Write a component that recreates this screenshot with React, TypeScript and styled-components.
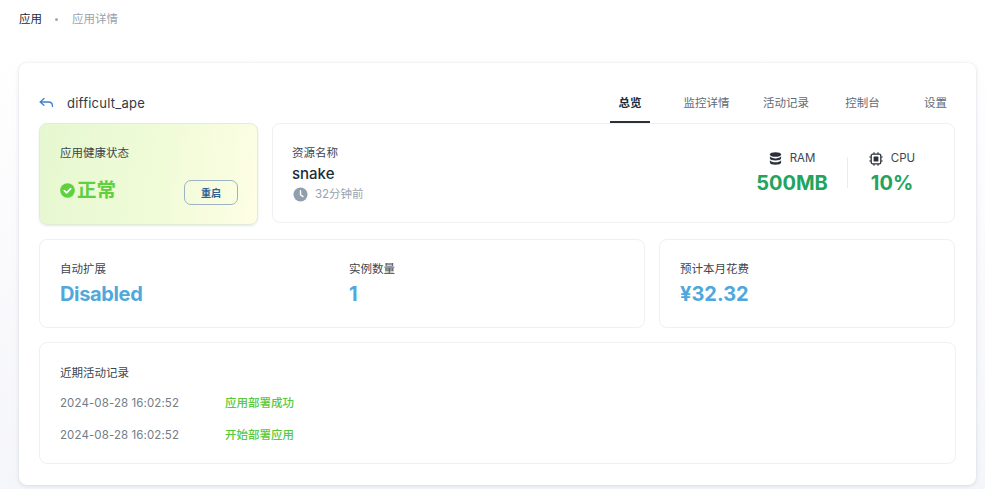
import React from "react";
import styled, { createGlobalStyle } from "styled-components";

const Global = createGlobalStyle`
  html, body { margin: 0; padding: 0; background: #fff; }
  body { font-family: Inter, "Noto Sans CJK SC", sans-serif; width: 985px; height: 489px; overflow: hidden; }
`;
const Page = styled.div`
  height: 489px; box-sizing: border-box; padding: 0 9px 0 19px;
  background: linear-gradient(180deg, #fff 0, #fff 40px, #f9f9fc 300px, #f5f6fa 489px);
  overflow: hidden;
`;
const Crumbs = styled.div`
  height: 63px; box-sizing: border-box; padding-top: 11px; display: flex; align-items: flex-start;
  font-size: 11.5px; line-height: 17px; color: #212b36;
`;
const Dot = styled.span`
  width: 3px; height: 3px; border-radius: 50%; background: #a0a8b2; margin: 7px 14px 0 13px;
`;
const CrumbMuted = styled.span` color: #9aa3ae; `;
const Shell = styled.div`
  width: 957px; height: 422px; box-sizing: border-box; padding: 24px 20px 0;
  background: #fff; border-radius: 8px;
  box-shadow: 0 1px 4px rgba(145,158,171,.28), 0 0 2px rgba(145,158,171,.12);
`;
const Head = styled.div`
  height: 36px; display: flex; justify-content: space-between; align-items: stretch;
`;
const TitleWrap = styled.div`
  display: flex; align-items: center; gap: 13px; height: 32px;
`;
const Title = styled.span`
  font-size: 13px; color: #2f3a45; letter-spacing: .25px;
`;
const Tabs = styled.div` display: flex; height: 36px; margin-right: 1px; `;
const Tab = styled.div<{ $w: number; $active?: boolean }>`
  width: ${p => p.$w}px; box-sizing: border-box; text-align: center; padding-top: 8px;
  font-size: 11.5px; line-height: 16px;
  color: ${p => (p.$active ? "#212b36" : "#5f6b78")};
  font-weight: ${p => (p.$active ? 600 : 400)};
  border-bottom: 2px solid ${p => (p.$active ? "#2b3138" : "transparent")};
`;
const Row = styled.div`
  display: flex; align-items: flex-start; gap: 14px; margin-bottom: 14px;
`;
const Card = styled.div<{ $w: number; $h: number; $top?: number; $left?: number }>`
  width: ${p => p.$w}px; height: ${p => p.$h}px; box-sizing: border-box;
  padding: ${p => p.$top ?? 21}px 19px 0 ${p => p.$left ?? 20}px;
  border: 1px solid #eef0f3; border-radius: 8px; background: #fff;
  flex: none;
`;
const HealthCard = styled(Card)`
  background: linear-gradient(100deg, #e6f8d0 0%, #f0fbd8 55%, #fefee4 100%);
  border-color: #e3ecd9;
  box-shadow: 0 1px 2px rgba(145,158,171,.25);
`;
const Label = styled.div`
  font-size: 11.5px; line-height: 17px; color: #3c4650;
`;
const HealthRow = styled.div`
  display: flex; justify-content: space-between; align-items: flex-start; margin-top: 14px;
`;
const Status = styled.div`
  display: flex; align-items: center; gap: 2px; color: #5fd03f; font-size: 19.5px; font-weight: 600; line-height: 28px;
`;
const Restart = styled.button`
  width: 54px; height: 25px; padding: 0; border: 1px solid #9db2c2; border-radius: 7px; background: transparent;
  font: 600 10px Inter, "Noto Sans CJK SC", sans-serif; color: #2f5f95; margin-top: 4px;
`;
const ResourceCard = styled(Card)`
  display: flex; justify-content: space-between;
`;
const ResName = styled.div`
  font-size: 15px; line-height: 20px; color: #212b36; margin-top: 2px; font-weight: 500;
`;
const Since = styled.div`
  display: flex; align-items: center; gap: 7px; margin-left: 1px;
  font-size: 11.5px; line-height: 20px; color: #98a2ad;
`;
const Metrics = styled.div`
  display: flex; align-items: flex-start; padding-top: 5px; margin-right: 17px;
`;
const Metric = styled.div<{ $w: number }>`
  width: ${p => p.$w}px; display: flex; flex-direction: column; align-items: center;
`;
const MetricHead = styled.div`
  display: flex; align-items: center; gap: 8px; font-size: 11.5px; line-height: 17px; color: #3c4650; height: 17px;
`;
const MetricValue = styled.div`
  font-size: 20px; line-height: 28px; font-weight: 700; color: #22a45d; margin-top: 2px;
`;
const Divider = styled.div`
  width: 1px; height: 31px; background: #e9ecef; margin: 7px 18px 0 20px;
`;
const Pair = styled.div`
  display: grid; grid-template-columns: 289px 1fr;
`;
const BigValue = styled.div<{ $tight?: boolean }>`
  font-size: 20px; line-height: 28px; font-weight: 700; color: #4fa8dc; margin-top: 2px;
  letter-spacing: ${p => (p.$tight ? "-0.35px" : "0")};
`;
const LogList = styled.div`
  display: flex; flex-direction: column; gap: 15px; margin-top: 13px;
`;
const LogRow = styled.div`
  display: grid; grid-template-columns: 165px 1fr; font-size: 11.5px; line-height: 17px;
`;
const LogTime = styled.span` color: #737d88; letter-spacing: .1px; `;
const LogText = styled.span` color: #56c93c; font-weight: 500; `;

const Back = () => (
  <svg width="15" height="14" viewBox="0 0 15 14" fill="none" stroke="#3f7fcf" strokeWidth="1.3" strokeLinecap="round" strokeLinejoin="round">
    <path d="M5 2.5 1.2 6 5 9.2" />
    <path d="M1.4 6H9.6c2.3 0 3.9 1.6 3.9 4.4" />
  </svg>
);
const Check = () => (
  <svg width="15" height="15" viewBox="0 0 15 15">
    <circle cx="7.5" cy="7.5" r="7.3" fill="#5fd03f" />
    <path d="M4.3 7.6 6.6 9.8 10.7 5.6" fill="none" stroke="#fff" strokeWidth="1.7" strokeLinecap="round" strokeLinejoin="round" />
  </svg>
);
const Clock = () => (
  <svg width="15" height="15" viewBox="0 0 15 15">
    <circle cx="7.5" cy="7.5" r="7" fill="#919eab" />
    <path d="M7.5 3.8V7.8L10 9.6" fill="none" stroke="#fff" strokeWidth="1.4" strokeLinecap="round" strokeLinejoin="round" />
  </svg>
);
const Database = () => (
  <svg width="13" height="13" viewBox="0 0 13 13" fill="#2b3138">
    <ellipse cx="6.5" cy="2.5" rx="5.6" ry="2.3" />
    <path d="M.9 4.3c1 1.5 3.2 2.1 5.6 2.1s4.6-.6 5.6-2.1v2c0 1.3-2.5 2.3-5.6 2.3S.9 7.6.9 6.3z" />
    <path d="M.9 8.2c1 1.5 3.2 2.1 5.6 2.1s4.6-.6 5.6-2.1v2.2c0 1.3-2.5 2.3-5.6 2.3S.9 11.7.9 10.4z" />
  </svg>
);
const Chip = () => (
  <svg width="14" height="14" viewBox="0 0 14 14" fill="none" stroke="#2b3138">
    <rect x="2.2" y="2.2" width="9.6" height="9.6" rx="1.6" strokeWidth="1.3" />
    <rect x="4.6" y="4.6" width="4.8" height="4.8" fill="#2b3138" stroke="none" rx=".5" />
    <path d="M5 .3v1.6M9 .3v1.6M5 12.1v1.6M9 12.1v1.6M.3 5h1.6M.3 9h1.6M12.1 5h1.6M12.1 9h1.6" strokeWidth="1.1" />
  </svg>
);

export default function App() {
  return (
    <Page>
      <Global />
      <Crumbs>
        <span>应用</span>
        <Dot />
        <CrumbMuted>应用详情</CrumbMuted>
      </Crumbs>
      <Shell>
        <Head>
          <TitleWrap>
            <Back />
            <Title>difficult_ape</Title>
          </TitleWrap>
          <Tabs>
            <Tab $w={40} $active>总览</Tab>
            <Tab $w={113}>监控详情</Tab>
            <Tab $w={46}>活动记录</Tab>
            <Tab $w={107}>控制台</Tab>
            <Tab $w={39}>设置</Tab>
          </Tabs>
        </Head>
        <Row>
          <HealthCard $w={219} $h={102}>
            <Label>应用健康状态</Label>
            <HealthRow>
              <Status><Check />正常</Status>
              <Restart>重启</Restart>
            </HealthRow>
          </HealthCard>
          <ResourceCard $w={683} $h={100} $left={19}>
            <div>
              <Label>资源名称</Label>
              <ResName>snake</ResName>
              <Since><Clock />32分钟前</Since>
            </div>
            <Metrics>
              <Metric $w={70}>
                <MetricHead><Database />RAM</MetricHead>
                <MetricValue>500MB</MetricValue>
              </Metric>
              <Divider />
              <Metric $w={52}>
                <MetricHead><Chip />CPU</MetricHead>
                <MetricValue>10%</MetricValue>
              </Metric>
            </Metrics>
          </ResourceCard>
        </Row>
        <Row>
          <Card $w={606} $h={89}>
            <Pair>
              <div>
                <Label>自动扩展</Label>
                <BigValue $tight>Disabled</BigValue>
              </div>
              <div>
                <Label>实例数量</Label>
                <BigValue>1</BigValue>
              </div>
            </Pair>
          </Card>
          <Card $w={296} $h={89}>
            <Label>预计本月花费</Label>
            <BigValue>¥32.32</BigValue>
          </Card>
        </Row>
        <Card $w={917} $h={122} $top={22}>
          <Label>近期活动记录</Label>
          <LogList>
            <LogRow><LogTime>2024-08-28 16:02:52</LogTime><LogText>应用部署成功</LogText></LogRow>
            <LogRow><LogTime>2024-08-28 16:02:52</LogTime><LogText>开始部署应用</LogText></LogRow>
          </LogList>
        </Card>
      </Shell>
    </Page>
  );
}
